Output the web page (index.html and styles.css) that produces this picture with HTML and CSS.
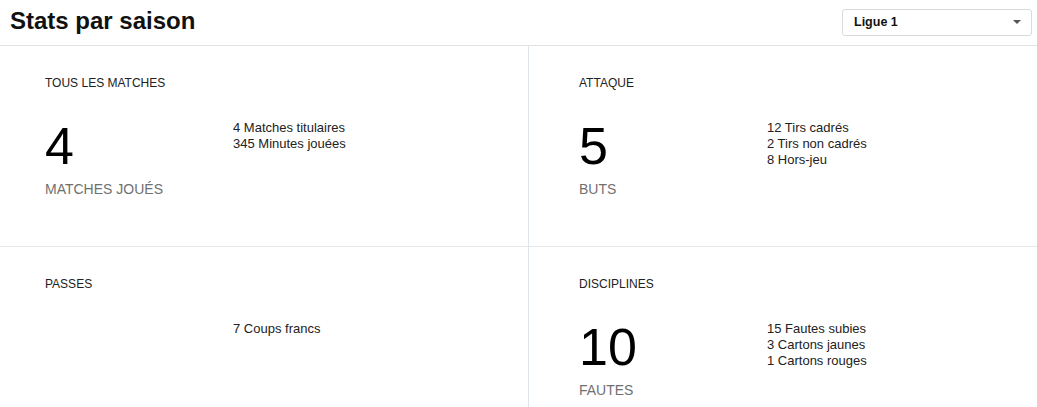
FILE: index.html
```html
<!DOCTYPE html>
<html lang="fr">

<head>
	<meta charset="UTF-8">
	<title>Stats par saison</title>
	<link rel="stylesheet" href="styles.css">
</head>

<body>
	<!-- en-tête -->
	<header class="page-header">
		<h1 class="page-title">Stats par saison</h1>
		<div class="league-select">
			<span>Ligue 1</span>
			<span class="caret"></span>
		</div>
	</header>

	<!-- grille des stats -->
	<div class="stats-grid">
		<div class="stat-card">
			<div class="card-label">TOUS LES MATCHES</div>
			<div class="card-body">
				<div class="card-main">
					<div class="big-number">4</div>
					<div class="big-label">MATCHES JOUÉS</div>
				</div>
				<ul class="card-details">
					<li>4 Matches titulaires</li>
					<li>345 Minutes jouées</li>
				</ul>
			</div>
		</div>
		<div class="stat-card">
			<div class="card-label">ATTAQUE</div>
			<div class="card-body">
				<div class="card-main">
					<div class="big-number">5</div>
					<div class="big-label">BUTS</div>
				</div>
				<ul class="card-details">
					<li>12 Tirs cadrés</li>
					<li>2 Tirs non cadrés</li>
					<li>8 Hors-jeu</li>
				</ul>
			</div>
		</div>
		<div class="stat-card">
			<div class="card-label">PASSES</div>
			<div class="card-body">
				<div class="card-main"></div>
				<ul class="card-details">
					<li>7 Coups francs</li>
				</ul>
			</div>
		</div>
		<div class="stat-card">
			<div class="card-label">DISCIPLINES</div>
			<div class="card-body">
				<div class="card-main">
					<div class="big-number">10</div>
					<div class="big-label">FAUTES</div>
				</div>
				<ul class="card-details">
					<li>15 Fautes subies</li>
					<li>3 Cartons jaunes</li>
					<li>1 Cartons rouges</li>
				</ul>
			</div>
		</div>
	</div>
</body>

</html>
```

FILE: styles.css
```css
/* reset */
* {
	margin: 0;
	padding: 0;
	box-sizing: border-box;
}

ul {
	list-style: none;
}

body {
	font-family: "Liberation Sans", Arial, sans-serif;
	color: #111;
	background-color: #fff;
}

/* en-tête */
.page-header {
	height: 46px;
	padding: 0 5px 0 10px;
	border-bottom: 1px solid #e3e3e3;

	display: flex;
	justify-content: space-between;
	align-items: center;
}

.page-title {
	font-size: 24px;
	font-weight: bold;
	margin-top: -4px;
}

.league-select {
	width: 190px;
	height: 27px;
	padding: 0 11px;
	margin-top: -1px;
	border: 1px solid #d6dbe0;
	border-radius: 3px;
	font-size: 12.5px;
	font-weight: bold;

	display: flex;
	justify-content: space-between;
	align-items: center;
}

.caret {
	width: 0;
	height: 0;
	margin-right: -1px;
	border-left: 4px solid transparent;
	border-right: 4px solid transparent;
	border-top: 4px solid #555;
}

/* grille */
.stats-grid {
	display: grid;
	grid-template-columns: 529px 1fr;
	height: 361px;
	overflow: hidden;
}

.stat-card {
	height: 201px;
	padding: 30px 45px 0;
	border-bottom: 1px solid #e6e6e6;
}

.stat-card:nth-child(odd) {
	border-right: 1px solid #dde4ea;
}

.stat-card:nth-child(even) {
	padding-left: 50px;
}

.card-label {
	font-size: 12px;
	line-height: 14px;
	color: #222;
}

.card-body {
	display: flex;
	margin-top: 30px;
}

.card-main {
	width: 188px;
	flex-shrink: 0;
}

.big-number {
	font-size: 52px;
	line-height: 52px;
	color: #000;
}

.big-label {
	margin-top: 9px;
	font-size: 14px;
	line-height: 16px;
	color: #707070;
}

.card-details {
	font-size: 13px;
	line-height: 16px;
	color: #222;
}
```
